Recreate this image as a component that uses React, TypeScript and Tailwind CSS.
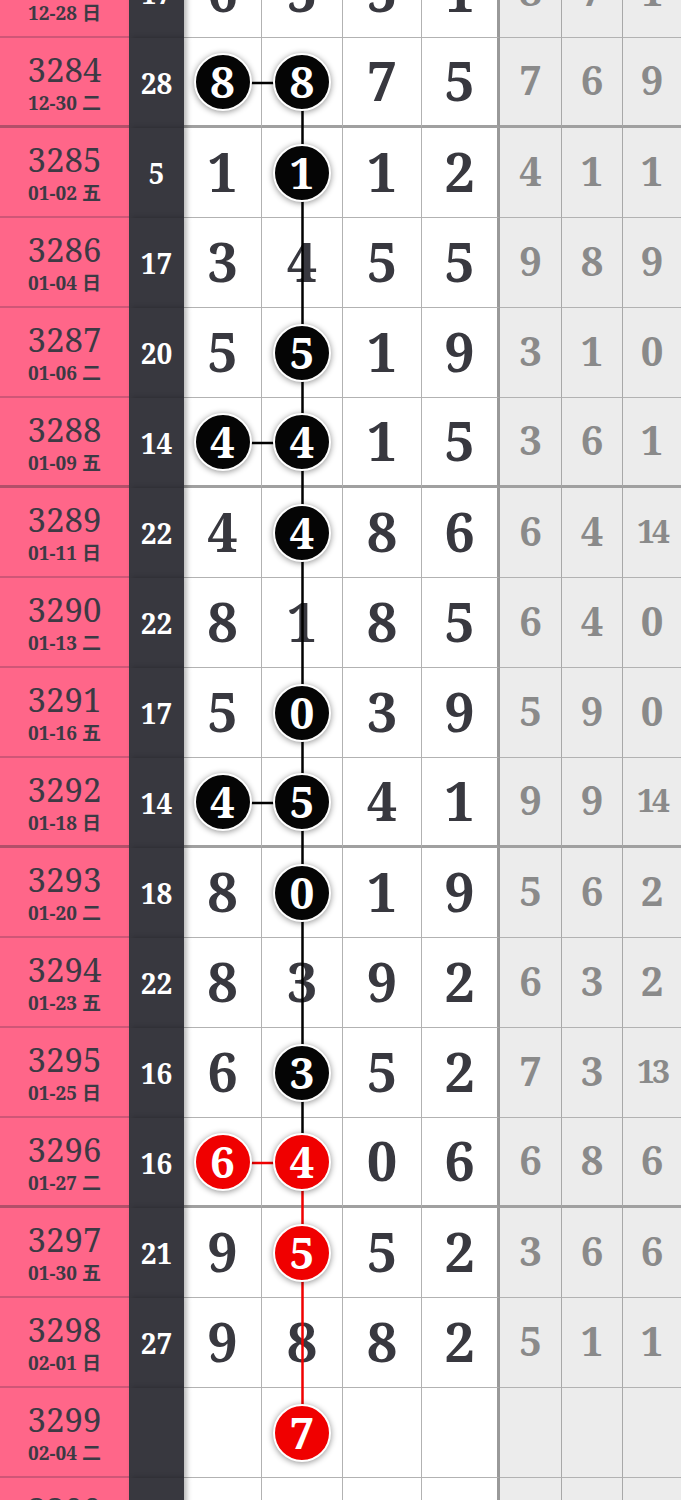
import React from 'react';

type R = {
  n: number;
  d: string;
  s: string;
  c: string[];
  g: string[];
  b?: number[];
};

const rows: R[] = [
  { n: 3283, d: '12-28 日', s: '17', c: ['6', '5', '5', '1'], g: ['8', '7', '1'] },
  { n: 3284, d: '12-30 二', s: '28', c: ['8', '8', '7', '5'], g: ['7', '6', '9'], b: [0, 1] },
  { n: 3285, d: '01-02 五', s: '5', c: ['1', '1', '1', '2'], g: ['4', '1', '1'], b: [1] },
  { n: 3286, d: '01-04 日', s: '17', c: ['3', '4', '5', '5'], g: ['9', '8', '9'] },
  { n: 3287, d: '01-06 二', s: '20', c: ['5', '5', '1', '9'], g: ['3', '1', '0'], b: [1] },
  { n: 3288, d: '01-09 五', s: '14', c: ['4', '4', '1', '5'], g: ['3', '6', '1'], b: [0, 1] },
  { n: 3289, d: '01-11 日', s: '22', c: ['4', '4', '8', '6'], g: ['6', '4', '14'], b: [1] },
  { n: 3290, d: '01-13 二', s: '22', c: ['8', '1', '8', '5'], g: ['6', '4', '0'] },
  { n: 3291, d: '01-16 五', s: '17', c: ['5', '0', '3', '9'], g: ['5', '9', '0'], b: [1] },
  { n: 3292, d: '01-18 日', s: '14', c: ['4', '5', '4', '1'], g: ['9', '9', '14'], b: [0, 1] },
  { n: 3293, d: '01-20 二', s: '18', c: ['8', '0', '1', '9'], g: ['5', '6', '2'], b: [1] },
  { n: 3294, d: '01-23 五', s: '22', c: ['8', '3', '9', '2'], g: ['6', '3', '2'] },
  { n: 3295, d: '01-25 日', s: '16', c: ['6', '3', '5', '2'], g: ['7', '3', '13'], b: [1] },
  { n: 3296, d: '01-27 二', s: '16', c: ['6', '4', '0', '6'], g: ['6', '8', '6'], b: [0, 1] },
  { n: 3297, d: '01-30 五', s: '21', c: ['9', '5', '5', '2'], g: ['3', '6', '6'], b: [1] },
  { n: 3298, d: '02-01 日', s: '27', c: ['9', '8', '8', '2'], g: ['5', '1', '1'] },
  { n: 3299, d: '02-04 二', s: '', c: ['', '7', '', ''], g: ['', '', ''], b: [1] },
  { n: 3300, d: '02-06 五', s: '', c: ['', '', '', ''], g: ['', '', ''] },
];

function Ball({ v, red }: { v: string; red: boolean }) {
  return (
    <div
      className={
        'relative z-10 w-[58px] h-[58px] rounded-full border-2 border-white flex items-center justify-center text-white font-bold text-[44px] leading-none shadow-[0_1px_6px_rgba(0,0,0,0.45)] ' +
        (red ? 'bg-[#f00000]' : 'bg-[#050505]')
      }
    >
      <span className="-mt-[2px]">{v}</span>
    </div>
  );
}

const cW = ['w-[78px]', 'w-[81px]', 'w-[79px]', 'w-[78px]'];
const gW = ['w-[62px]', 'w-[61px]', 'w-[58px]'];

function Row({ r }: { r: R }) {
  const thick = r.n % 4 === 0;
  const red = r.n >= 3296;
  const bb = thick ? 'border-b-[3px] border-b-[#a0a0a0]' : 'border-b border-b-[#b2b2b2]';
  const pinkB = thick ? 'border-b-[3px] border-b-[#b34f69]' : 'border-b-2 border-b-[#cf5677]';
  return (
    <div className="flex h-[90px]">
      <div className={'w-[129px] shrink-0 bg-[#ff6689] flex flex-col items-center justify-center pt-[3px] text-[#3c3a44] ' + pinkB}>
        <div className="text-[33px] leading-[39px] font-normal">{r.n}</div>
        <div className="text-[19px] leading-[28px] font-bold">{r.d}</div>
      </div>
      <div className="w-[55px] shrink-0 bg-[#38383f] relative z-[1] shadow-[3px_0_5px_rgba(0,0,0,0.28)] flex items-center justify-center text-white font-bold text-[28px]">
        {r.s}
      </div>
      {r.c.map((v, i) => (
        <div
          key={i}
          className={
            cW[i] +
            ' shrink-0 bg-white flex items-center justify-center text-[#38383f] font-bold text-[54px] leading-none ' +
            bb +
            (i === 3 ? ' border-r-[3px] border-r-[#999]' : ' border-r border-r-[#b2b2b2]')
          }
        >
          {r.b && r.b.includes(i) ? <Ball v={v} red={red} /> : <span className="-mt-[4px]">{v}</span>}
        </div>
      ))}
      {r.g.map((v, i) => (
        <div
          key={i}
          className={
            gW[i] +
            ' shrink-0 bg-[#ececec] flex items-center justify-center text-[#8a8a8a] font-bold leading-none ' +
            (v.length > 1 ? 'text-[32px] tracking-[-3px] ' : 'text-[40px] ') +
            bb +
            (i < 2 ? ' border-r border-r-[#a8a8a8]' : '')
          }
        >
          <span className="-mt-[3px]">{v}</span>
        </div>
      ))}
    </div>
  );
}

export default function App() {
  const yc = (i: number) => i * 90 + 45;
  const x1 = 223;
  const x2 = 302.5;
  return (
    <div className="w-[681px] h-[1500px] overflow-hidden bg-white font-['Noto_Serif','DejaVu_Serif','Noto_Sans_CJK_SC',serif]">
      <div className="relative -mt-[52px]">
        <svg className="absolute left-0 top-0 pointer-events-none" width="681" height="1620">
          <line x1={x2} y1={yc(1)} x2={x2} y2={yc(12)} stroke="#000" strokeWidth="2.5" />
          <line x1={x2} y1={yc(12)} x2={x2} y2={yc(13)} stroke="#000" strokeWidth="2.5" />
          <line x1={x2} y1={yc(13)} x2={x2} y2={yc(16)} stroke="#f00000" strokeWidth="2.5" />
          <line x1={x1} y1={yc(1)} x2={x2} y2={yc(1)} stroke="#000" strokeWidth="2.5" />
          <line x1={x1} y1={yc(5)} x2={x2} y2={yc(5)} stroke="#000" strokeWidth="2.5" />
          <line x1={x1} y1={yc(9)} x2={x2} y2={yc(9)} stroke="#000" strokeWidth="2.5" />
          <line x1={x1} y1={yc(13)} x2={x2} y2={yc(13)} stroke="#f00000" strokeWidth="2.5" />
        </svg>
        {rows.map((r) => (
          <Row key={r.n} r={r} />
        ))}
      </div>
    </div>
  );
}
